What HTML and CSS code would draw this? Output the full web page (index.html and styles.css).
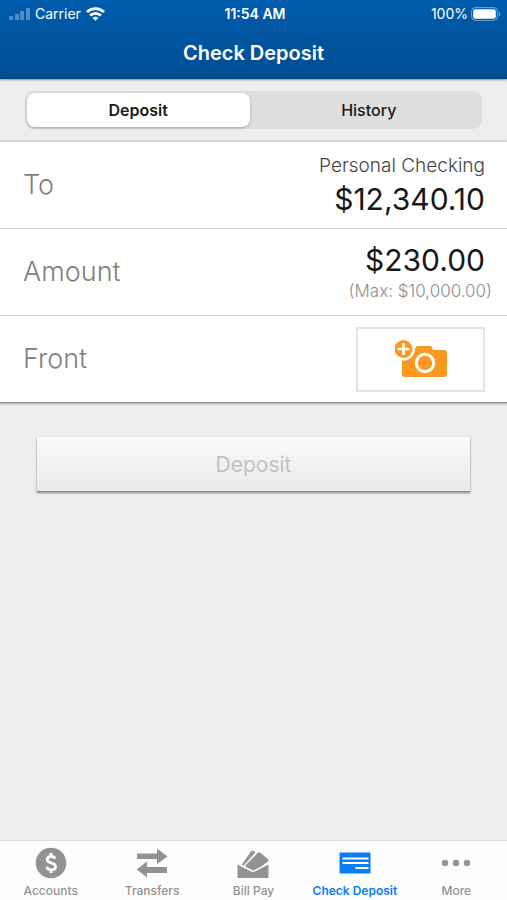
FILE: index.html
```html
<!DOCTYPE html>
<html lang="en">
<head>
<meta charset="utf-8">
<meta name="viewport" content="width=device-width, initial-scale=1">
<title>Check Deposit</title>
<link rel="stylesheet" href="styles.css">
</head>
<body>
<header class="header">
  <div class="status">
    <div class="status-left">
      <svg width="21" height="14" viewBox="0 0 21 14" fill="#fff" opacity=".32" aria-hidden="true"><rect x="0" y="9" width="4" height="4" rx="1"/><rect x="6" y="7" width="4" height="6" rx="1"/><rect x="11" y="4" width="4" height="9" rx="1"/><rect x="17" y="1" width="4" height="12" rx="1"/></svg>
      <span>Carrier</span>
      <svg width="19" height="14" viewBox="0 0 19 14" fill="none" stroke="#fff" stroke-width="2.8" aria-hidden="true"><path d="M1 5a12.200 12.200 0 0 1 17 0"/><path d="M4.100 8.500a7.700 7.700 0 0 1 10.800 0"/><path d="M9.500 13.800 6.500 10.900a4.200 4.200 0 0 1 6 0z" fill="#fff" stroke="none"/></svg>
    </div>
    <span class="clock">11:54 AM</span>
    <div class="status-right">
      <span>100%</span>
      <svg width="30" height="14" viewBox="0 0 30 14" aria-hidden="true"><rect x=".6" y=".6" width="25.8" height="12.8" rx="3.8" fill="none" stroke="#fff" stroke-opacity=".45"/><rect x="2.2" y="2.2" width="22.6" height="9.6" rx="2.4" fill="#fff"/><path d="M27.8 4.5q1.7.8 1.7 2.5t-1.7 2.5z" fill="#fff" fill-opacity=".45"/></svg>
    </div>
  </div>
  <h1 class="title">Check Deposit</h1>
</header>
<main class="content">
  <div class="switch-bar">
    <div class="switch">
      <button class="segment segment-on" type="button" aria-pressed="true">Deposit</button>
      <button class="segment" type="button" aria-pressed="false">History</button>
    </div>
  </div>
  <form class="form">
    <div class="rows">
      <div class="row">
        <span class="label">To</span>
        <div class="value">
          <span class="account">Personal Checking</span>
          <span class="money">$12,340.10</span>
        </div>
      </div>
      <div class="row">
        <label class="label" for="amount">Amount</label>
        <div class="value value-wide">
          <input class="money" id="amount" type="text" value="$230.00">
          <span class="max">(Max: $10,000.00)</span>
        </div>
      </div>
      <div class="row">
        <label class="label" for="front">Front</label>
        <button class="photo" id="front" type="button">
          <svg width="52" height="38" viewBox="0 0 52 38" aria-hidden="true"><path d="M23 6h12q1.500 0 2 1.500l1 2.500h11q3 0 3 3v21q0 3-3 3H10q-3 0-3-3V10h12l1.800-2.800Q21.500 6 23 6z" fill="#fb9820"/><circle cx="8.500" cy="9" r="11.500" fill="#fff"/><circle cx="8.500" cy="9" r="9" fill="#fb9820"/><path d="M8.500 3v12M2.500 9h12" stroke="#fff" stroke-width="2.600"/><circle cx="30" cy="23" r="8.700" fill="none" stroke="#fff" stroke-width="3"/></svg>
        </button>
      </div>
    </div>
    <button class="submit" type="submit" disabled>Deposit</button>
  </form>
</main>
<nav class="tabs">
  <a class="tab" href="#accounts">
    <svg width="32" height="32" viewBox="0 0 32 32" aria-hidden="true"><circle cx="16" cy="16" r="15.300" fill="#929292"/><path d="M20.200 11.800q-1-2.300-4.200-2.300-3.800 0-3.800 3 0 2.200 3.800 3.300 4.500 1.200 4.500 3.900 0 3.100-4.300 3.100-3.600 0-4.600-2.700M16 6v4M16 22v4" fill="none" stroke="#fff" stroke-width="2.800"/></svg>
    <span>Accounts</span>
  </a>
  <a class="tab" href="#transfers">
    <svg width="32" height="32" viewBox="0 0 32 32" fill="#929292" aria-hidden="true"><path d="M1 6.500h20V1.500L31.500 9.500 21 17v-5H1zM31 20H11v-5.500L.8 22.500 11 30.500V26h20z"/></svg>
    <span>Transfers</span>
  </a>
  <a class="tab" href="#bill-pay">
    <svg width="32" height="32" viewBox="0 0 32 32" fill="#929292" aria-hidden="true"><path d="M.5 17.500 16 25.500l15.500-8V31H.5zM4.800 17.800 13.500 5q1.300-1.800 3-1L18.500 5.200 6.500 18.800zM7.800 19.300 20.500 5.900q1.500-1.200 3-.2L31 12.200q1 1.200-.1 2.200L23.500 20 16 23.600z"/></svg>
    <span>Bill Pay</span>
  </a>
  <a class="tab tab-on" href="#check-deposit" aria-current="page">
    <svg width="32" height="32" viewBox="0 0 32 32" aria-hidden="true"><path d="M.5 5.500h31v21H.5z" fill="#0b7cf8"/><path d="M3.500 11.500h26M3.500 16h26M16.500 21h13" stroke="#fff" stroke-width="2"/></svg>
    <span>Check Deposit</span>
  </a>
  <a class="tab" href="#more">
    <svg width="32" height="32" viewBox="0 0 32 32" fill="#929292" aria-hidden="true"><circle cx="5" cy="16" r="3.200"/><circle cx="16" cy="16" r="3.200"/><circle cx="27" cy="16" r="3.200"/></svg>
    <span>More</span>
  </a>
</nav>
</body>
</html>
```
FILE: styles.css
```css
* { box-sizing: border-box; }

body {
  margin: 0;
  min-height: 100vh;
  display: flex;
  flex-direction: column;
  background: #ededed;
  color: #181818;
  font-family: Inter, "Liberation Sans", sans-serif;
}

button, input { font-family: inherit; color: inherit; }
svg { display: block; flex: none; }

.header {
  position: relative;
  background: linear-gradient(#005dad, #004d90);
  border-bottom: 1px solid #003f79;
  box-shadow: 0 1px 2px rgba(0, 0, 0, .4);
  color: #fff;
}

.status {
  display: grid;
  grid-template-columns: 1fr auto 1fr;
  align-items: center;
  height: 28px;
  padding: 0 6px 0 9px;
  font-size: 14px;
  line-height: 16px;
}
.status-left, .status-right { display: flex; align-items: center; gap: 5px; }
.status-right { justify-content: flex-end; gap: 3px; }
.clock { font-weight: 600; }

.title {
  margin: 0;
  padding: 12px 0;
  font-size: 20px;
  line-height: 26px;
  font-weight: 600;
  text-align: center;
}

.content { flex: 1; }

.switch-bar {
  padding: 12px 25px 11px;
  border-bottom: 2px solid #dadada;
}
.switch {
  display: grid;
  grid-template-columns: 1fr 1fr;
  gap: 8px;
  padding: 2px;
  border-radius: 9px;
  background: #dedede;
}
.segment {
  height: 34px;
  padding: 0;
  border: 0;
  border-radius: 8px;
  background: none;
  font-size: 16px;
  font-weight: 500;
}
.segment-on {
  background: #fff;
  box-shadow: 0 1px 3px rgba(0, 0, 0, .25);
  font-weight: 600;
}

.rows {
  background: #fff;
  border-bottom: 1px solid #8e8e8e;
  box-shadow: 0 1px 2px rgba(0, 0, 0, .3);
}
.row {
  display: flex;
  align-items: center;
  justify-content: space-between;
  height: 87px;
  padding: 0 22px 0 23px;
  border-bottom: 1px solid #d6d6d6;
}
.row:last-child { height: 86px; border-bottom: 0; }
.label {
  color: #808080;
  font-size: 27px;
  line-height: 32px;
  font-weight: 300;
}
.value {
  display: flex;
  flex-direction: column;
  align-items: flex-end;
}
.value-wide { margin-right: -7px; }
.value-wide .money { padding-right: 7px; }
.account {
  color: #444;
  font-size: 19px;
  line-height: 28px;
  font-weight: 300;
}
.money {
  width: 180px;
  height: 38px;
  padding: 0;
  border: 0;
  background: none;
  font-size: 30px;
  line-height: 38px;
  font-weight: 400;
  text-align: right;
}
.max {
  color: #8e8e8e;
  font-size: 17px;
  line-height: 24px;
  font-weight: 300;
}
.photo {
  display: grid;
  place-items: center;
  width: 129px;
  height: 65px;
  padding: 0;
  border: 2px solid #e4e4e4;
  background: #fff;
}

.submit {
  display: block;
  width: calc(100% - 74px);
  height: 55px;
  margin: 34px auto;
  padding: 0;
  border: 0;
  border-bottom: 1px solid #8e8e8e;
  background: linear-gradient(#fafafa, #e9e9e9);
  box-shadow: 0 1px 2px rgba(0, 0, 0, .45);
  color: #c2c2c2;
  font-size: 21px;
  font-weight: 400;
}

.tabs {
  display: grid;
  grid-template-columns: repeat(5, 1fr);
  height: 60px;
  padding: 6px 0 0;
  border-top: 1px solid #dedede;
  background: #fdfdfd;
}
.tab {
  display: flex;
  flex-direction: column;
  align-items: center;
  gap: 4px;
  color: #929292;
  font-size: 12px;
  line-height: 16px;
  font-weight: 500;
  text-decoration: none;
  white-space: nowrap;
}
.tab-on { color: #0b7cf8; font-weight: 600; }
```
